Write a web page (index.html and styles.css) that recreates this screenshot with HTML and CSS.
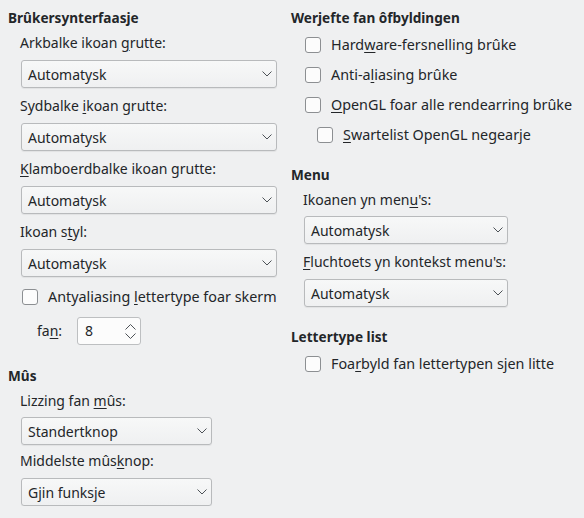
FILE: index.html
```html
<!DOCTYPE html>
<html lang="fy">
<head>
<meta charset="utf-8">
<title>Werjefte</title>
<link rel="stylesheet" href="styles.css">
</head>
<body>
<div class="page">
  <div class="col left">
    <div class="heading">Brûkersynterfaasje</div>
    <div class="label l-first">Arkbalke ikoan <u>g</u>rutte:</div>
    <div class="combo w-wide"><span>Automatysk</span><svg class="chev" width="10" height="6" viewBox="0 0 10 6"><path d="M0.5 0.5 L5 5 L9.5 0.5"/></svg></div>
    <div class="label">Sydbalke <u>i</u>koan grutte:</div>
    <div class="combo w-wide"><span>Automatysk</span><svg class="chev" width="10" height="6" viewBox="0 0 10 6"><path d="M0.5 0.5 L5 5 L9.5 0.5"/></svg></div>
    <div class="label"><u>K</u>lamboerdbalke ikoan grutte:</div>
    <div class="combo w-wide"><span>Automatysk</span><svg class="chev" width="10" height="6" viewBox="0 0 10 6"><path d="M0.5 0.5 L5 5 L9.5 0.5"/></svg></div>
    <div class="label">Ikoan s<u>t</u>yl:</div>
    <div class="combo w-wide"><span>Automatysk</span><svg class="chev" width="10" height="6" viewBox="0 0 10 6"><path d="M0.5 0.5 L5 5 L9.5 0.5"/></svg></div>
    <div class="check left-check"><span class="box"></span><span class="ctext">Antyaliasing <u>l</u>ettertype foar skerm</span></div>
    <div class="spinrow">
      <span class="spinlabel">fa<u>n</u>:</span>
      <div class="spin"><span>8</span>
        <span class="arrows">
          <svg width="11" height="6" viewBox="0 0 11 6"><path d="M0.5 5.5 L5.5 0.5 L10.5 5.5"/></svg>
          <svg width="11" height="6" viewBox="0 0 11 6"><path d="M0.5 0.5 L5.5 5.5 L10.5 0.5"/></svg>
        </span>
      </div>
    </div>
    <div class="heading h-mus">Mûs</div>
    <div class="label l-first">Lizzing fan <u>m</u>ûs:</div>
    <div class="combo w-mus c-tight"><span>Standertknop</span><svg class="chev" width="10" height="6" viewBox="0 0 10 6"><path d="M0.5 0.5 L5 5 L9.5 0.5"/></svg></div>
    <div class="label l-tight">Middelste mûs<u>k</u>nop:</div>
    <div class="combo w-mus"><span>Gjin funksje</span><svg class="chev" width="10" height="6" viewBox="0 0 10 6"><path d="M0.5 0.5 L5 5 L9.5 0.5"/></svg></div>
  </div>
  <div class="col right">
    <div class="heading">Werjefte fan ôfbyldingen</div>
    <div class="check r-first"><span class="box"></span><span class="ctext">Hard<u>w</u>are-fersnelling brûke</span></div>
    <div class="check r-next"><span class="box"></span><span class="ctext">Anti-a<u>l</u>iasing brûke</span></div>
    <div class="check r-next"><span class="box"></span><span class="ctext"><u>O</u>penGL foar alle rendearring brûke</span></div>
    <div class="check r-next sub"><span class="box"></span><span class="ctext"><u>S</u>wartelist OpenGL negearje</span></div>
    <div class="heading h-menu">Menu</div>
    <div class="label l-first">Ikoanen yn men<u>u</u>'s:</div>
    <div class="combo w-right c-tight"><span>Automatysk</span><svg class="chev" width="10" height="6" viewBox="0 0 10 6"><path d="M0.5 0.5 L5 5 L9.5 0.5"/></svg></div>
    <div class="label"><u>F</u>luchtoets yn kontekst menu's:</div>
    <div class="combo w-right"><span>Automatysk</span><svg class="chev" width="10" height="6" viewBox="0 0 10 6"><path d="M0.5 0.5 L5 5 L9.5 0.5"/></svg></div>
    <div class="heading h-font">Lettertype list</div>
    <div class="check r-first"><span class="box"></span><span class="ctext">Foa<u>r</u>byld fan lettertypen sjen litte</span></div>
  </div>
</div>
</body>
</html>
```

FILE: styles.css
```css
html, body {
  margin: 0;
  padding: 0;
  background: #eff0f1;
}
body {
  font-family: "Noto Sans", "DejaVu Sans", sans-serif;
  font-size: 14px;
  line-height: 18px;
  color: #232629;
}
u {
  text-decoration: underline;
  text-decoration-thickness: 1px;
  text-underline-offset: 2px;
}
.page {
  display: flex;
  padding: 9px 0 0 8px;
  gap: 6px;
}
.col {
  display: flex;
  flex-direction: column;
  align-items: flex-start;
}
.left { width: 277px; }
.right { width: 293px; }
.heading {
  font-weight: bold;
  font-size: 13.6px;
  height: 18px;
}
.label {
  margin: 9px 0 0 12px;
  height: 18px;
  white-space: nowrap;
}
.label.l-first { margin-top: 7px; }
.label.l-tight { margin-top: 7px; }
.combo {
  box-sizing: border-box;
  height: 28px;
  margin: 8px 0 0 13px;
  padding: 0 4px 0 6px;
  display: flex;
  align-items: center;
  justify-content: space-between;
  border: 1px solid #b8babc;
  border-radius: 3px;
  background: linear-gradient(#f7f8f8, #eff0f1);
  box-shadow: 0 1px 1px rgba(0,0,0,0.06);
}
.combo.c-tight { margin-top: 7px; }
.right .label { margin-left: 12px; }
.right .combo { margin-left: 13px; }
.combo span { padding-top: 1px; }
.chev {
  fill: none;
  stroke: #4d5257;
  stroke-width: 1;
}
.w-wide { width: 256px; }
.w-mus { width: 191px; }
.w-right { width: 204px; }
.check {
  display: flex;
  align-items: center;
  gap: 10px;
  height: 18px;
  margin-left: 14px;
  white-space: nowrap;
}
.ctext { font-size: 14.35px; }
.box {
  box-sizing: border-box;
  width: 16px;
  height: 16px;
  border: 1px solid #8c8f92;
  border-radius: 3px;
  background: #fcfcfc;
  flex: none;
}
.left-check { margin-top: 11px; }
.r-first { margin-top: 9px; }
.r-next { margin-top: 12px; }
.check.sub { margin-left: 26px; }
.spinrow {
  display: flex;
  align-items: center;
  gap: 15px;
  margin: 11px 0 0 29px;
}
.spinlabel { padding-bottom: 1px; }
.spin {
  box-sizing: border-box;
  width: 64px;
  height: 28px;
  border: 1px solid #bdbfc1;
  border-radius: 3px;
  background: #fcfcfc;
  display: flex;
  align-items: center;
  justify-content: space-between;
  padding: 0 4px 0 7px;
}
.arrows {
  display: flex;
  flex-direction: column;
  gap: 3px;
}
.arrows svg {
  fill: none;
  stroke: #4d5257;
  stroke-width: 1;
}
.h-mus { margin-top: 22px; }
.h-menu { margin-top: 22px; }
.h-font { margin-top: 21px; }
```
